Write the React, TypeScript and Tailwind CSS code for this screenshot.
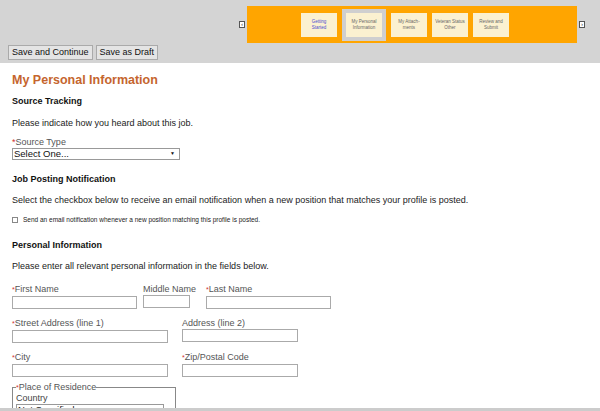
const F = { fontFamily: '"Liberation Sans", Arial, sans-serif' }

function Step({ label, active, link }: { label: string; active?: boolean; link?: boolean }) {
  return (
    <div className={`flex items-center justify-center ${active ? 'bg-[#cfcfcf] p-[4px]' : ''}`}>
      <div className={`w-[36px] h-[24px] bg-[#fbf1d0] flex items-center justify-center text-center text-[4.5px] leading-[6px] px-[3px] break-words ${link ? 'text-[#4a4ad0]' : 'text-[#666]'}`}>
        {label}
      </div>
    </div>
  )
}

function Field({ label, req, w }: { label: string; req?: boolean; w: string }) {
  return (
    <div className="flex flex-col">
      <span className="text-[9px] leading-[12px] text-[#555]">
        {req && <span className="text-[#d03030] text-[7px]">*</span>}
        {label}
      </span>
      <div className={`${w} h-[13px] border border-[#aaa] bg-white`} />
    </div>
  )
}

export default function App() {
  return (
    <div className="w-[600px] h-[411px] overflow-hidden bg-white relative" style={F}>
      {/* header */}
      <div className="bg-[#d4d4d4] h-[63px] pt-[6px]">
        <div className="flex items-center ml-[239px]">
          <div className="w-[6px] h-[7px] border border-[#555] bg-white text-[5px] leading-[5px] text-center">‹</div>
          <div className="ml-[2px] w-[330px] h-[37px] bg-[#ffa500] flex items-center pl-[54px] gap-[5px]">
            <Step label="Getting Started" link />
            <Step label="My Personal Information" active />
            <Step label="My Attach­ments" />
            <Step label="Veteran Status Other" />
            <Step label="Review and Submit" />
          </div>
          <div className="ml-[2px] w-[6px] h-[7px] border border-[#555] bg-white text-[5px] leading-[5px] text-center">›</div>
        </div>
        <div className="flex gap-[3px] ml-[8px] mt-[2px]">
          <button className="h-[15px] px-[3px] bg-[#e4e4e4] border border-[#aaa] text-[9px] text-[#111]">Save and Continue</button>
          <button className="h-[15px] px-[3px] bg-[#e4e4e4] border border-[#aaa] text-[9px] text-[#111]">Save as Draft</button>
        </div>
      </div>

      <div className="px-[12px]">
        <h1 className="mt-[9px] text-[12.5px] font-bold text-[#c5652e] leading-[16px]">My Personal Information</h1>
        <h2 className="mt-[7px] text-[9px] font-bold text-[#111]">Source Tracking</h2>
        <p className="mt-[8px] text-[9px] text-[#222]">Please indicate how you heard about this job.</p>
        <div className="mt-[7px] text-[9px] text-[#555] leading-[11px]"><span className="text-[#d03030]">*</span>Source Type</div>
        <div className="w-[168px] h-[12px] border border-[#999] flex items-center justify-between px-[1px] text-[9.5px] text-[#111]">
          <span>Select One...</span><span className="text-[5px] mr-[3px]">▼</span>
        </div>
        <h2 className="mt-[13px] text-[9px] font-bold text-[#111]">Job Posting Notification</h2>
        <p className="mt-[7px] text-[9px] text-[#222]">Select the checkbox below to receive an email notification when a new position that matches your profile is posted.</p>
        <div className="mt-[8px] flex items-center gap-[5px] text-[6.5px] text-[#222]">
          <div className="w-[6px] h-[6px] border border-[#888] bg-white" />
          Send an email notification whenever a new position matching this profile is posted.
        </div>
        <h2 className="mt-[14px] text-[9px] font-bold text-[#111]">Personal Information</h2>
        <p className="mt-[8px] text-[9px] text-[#222]">Please enter all relevant personal information in the fields below.</p>

        <div className="mt-[9px] flex gap-[6px]">
          <Field label="First Name" req w="w-[125px]" />
          <Field label="Middle Name" w="w-[47px]" />
          <div className="ml-[4px]"><Field label="Last Name" req w="w-[125px]" /></div>
        </div>
        <div className="mt-[8px] flex gap-[14px]">
          <Field label="Street Address (line 1)" req w="w-[156px]" />
          <Field label="Address (line 2)" w="w-[116px]" />
        </div>
        <div className="mt-[8px] flex gap-[14px]">
          <Field label="City" req w="w-[156px]" />
          <Field label="Zip/Postal Code" req w="w-[116px]" />
        </div>
        <fieldset className="mt-[5px] w-[164px] border border-[#888] px-[3px] pb-[4px]">
          <legend className="text-[9px] text-[#555] leading-[10px] px-0"><span className="text-[#d03030] text-[7px]">*</span>Place of Residence</legend>
          <div className="text-[9px] text-[#444] leading-[11px]">Country</div>
          <div className="w-[148px] h-[12px] border border-[#999] flex items-center justify-between px-[1px] text-[9.5px] text-[#111]">
            <span>Not Specified</span><span className="text-[5px] mr-[3px]">▼</span>
          </div>
        </fieldset>
      </div>
      <div className="absolute left-0 right-0 bottom-0 h-[3px] bg-[#ccc]" />
    </div>
  )
}
